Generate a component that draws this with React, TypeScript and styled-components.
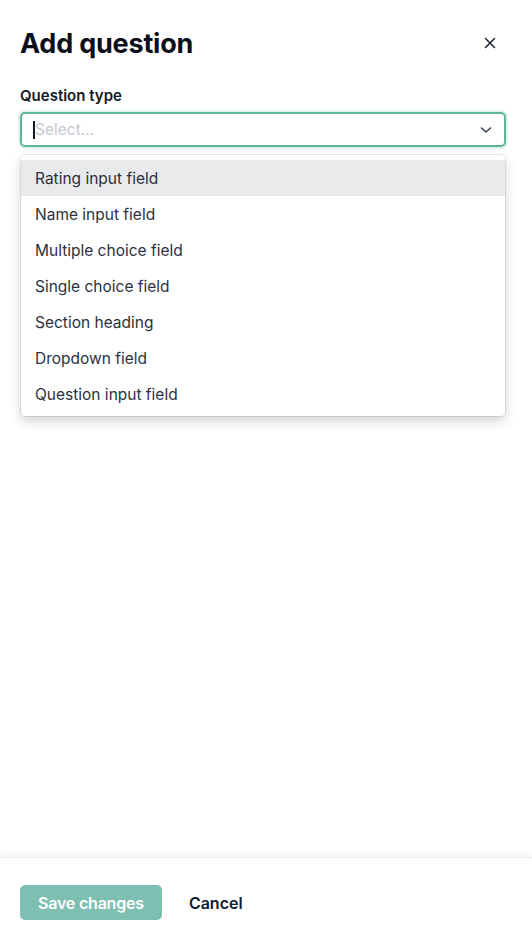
import styled, { createGlobalStyle } from 'styled-components';

const GlobalStyle = createGlobalStyle`
	html, body {
		margin: 0;
		padding: 0;
		background: #fff;
	}
	body {
		font-family: Inter, 'Noto Sans', sans-serif;
		color: #111827;
	}
`;

const Panel = styled.div`
	width: 532px;
	height: 946px;
	display: flex;
	flex-direction: column;
	background: #fff;
`;

const Body = styled.div`
	flex: 1;
	padding: 23px 26px 0 20px;
	display: flex;
	flex-direction: column;
`;

const Header = styled.div`
	display: flex;
	align-items: center;
	justify-content: space-between;
	height: 40px;
`;

const Title = styled.h1`
	margin: 0;
	font-size: 27px;
	font-weight: 700;
	letter-spacing: -0.2px;
	color: #0b0f19;
`;

const CloseButton = styled.button`
	border: none;
	background: none;
	padding: 0;
	width: 24px;
	height: 24px;
	margin-right: 4px;
	display: flex;
	align-items: center;
	justify-content: center;
	color: #1f2937;
	cursor: pointer;
`;

const Label = styled.div`
	margin-top: 23px;
	font-size: 15px;
	font-weight: 600;
	line-height: 20px;
	color: #111827;
`;

const Field = styled.div`
	position: relative;
	margin-top: 6px;
`;

const Control = styled.div`
	height: 35px;
	box-sizing: border-box;
	border: 2px solid #5fb49b;
	border-radius: 5px;
	box-shadow: 0 0 0 2px rgba(95, 180, 155, 0.18);
	display: flex;
	align-items: center;
	padding: 0 12px 0 11px;
`;

const Caret = styled.span`
	width: 2px;
	height: 18px;
	background: #111827;
`;

const Placeholder = styled.span`
	flex: 1;
	font-size: 15.5px;
	color: #c3c7cf;
`;

const Menu = styled.div`
	position: absolute;
	top: 43px;
	left: 1px;
	right: 1px;
	background: #fff;
	border-radius: 4px;
	padding: 5px 0 4px;
	box-shadow: 0 0 0 1px rgba(0, 0, 0, 0.08), 0 5px 12px rgba(0, 0, 0, 0.18);
`;

const Option = styled.div<{ $active?: boolean }>`
	height: 36px;
	display: flex;
	align-items: center;
	padding: 0 14px;
	font-size: 15.5px;
	color: #2b3140;
	background: ${props => (props.$active ? '#e9eaec' : 'transparent')};
`;

const Footer = styled.div`
	height: 89px;
	box-sizing: border-box;
	padding: 27px 20px 0;
	display: flex;
	align-items: flex-start;
	gap: 27px;
	box-shadow: 0 -3px 6px rgba(0, 0, 0, 0.05);
	border-top: 1px solid #eeeeee;
`;

const SaveButton = styled.button`
	height: 35px;
	padding: 0 18px;
	border: none;
	border-radius: 5px;
	background: #7dbfb0;
	color: #fff;
	font-family: inherit;
	font-size: 16px;
	font-weight: 600;
	letter-spacing: -0.2px;
`;

const CancelButton = styled.button`
	height: 35px;
	padding: 0;
	border: none;
	background: none;
	color: #111a2e;
	font-family: inherit;
	font-size: 16px;
	font-weight: 600;
`;

const options = [
	'Rating input field',
	'Name input field',
	'Multiple choice field',
	'Single choice field',
	'Section heading',
	'Dropdown field',
	'Question input field',
];

const App = () => {
	return (
		<Panel>
			<GlobalStyle />
			<Body>
				<Header>
					<Title>Add question</Title>
					<CloseButton aria-label="Close">
						<svg width="12" height="12" viewBox="0 0 12 12" fill="none" stroke="currentColor" strokeWidth="1.6" strokeLinecap="round">
							<path d="M1.5 1.5l9 9M10.5 1.5l-9 9" />
						</svg>
					</CloseButton>
				</Header>
				<Label>Question type</Label>
				<Field>
					<Control>
						<Caret />
						<Placeholder>Select...</Placeholder>
						<svg width="12" height="8" viewBox="0 0 12 8" fill="none" stroke="#374151" strokeWidth="1.6" strokeLinecap="round" strokeLinejoin="round">
							<path d="M1.5 2l4.5 4 4.5-4" />
						</svg>
					</Control>
					<Menu>
						{options.map((o, i) => (
							<Option key={o} $active={i === 0}>
								{o}
							</Option>
						))}
					</Menu>
				</Field>
			</Body>
			<Footer>
				<SaveButton>Save changes</SaveButton>
				<CancelButton>Cancel</CancelButton>
			</Footer>
		</Panel>
	);
};

export default App;
